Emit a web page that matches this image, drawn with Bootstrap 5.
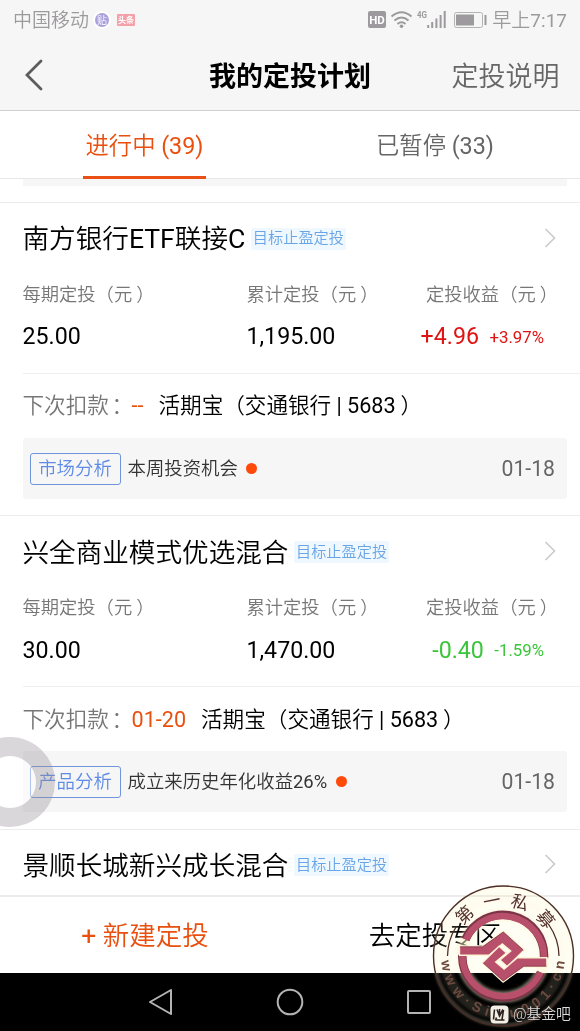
<!DOCTYPE html>
<html lang="zh-CN">
<head>
    <meta charset="UTF-8">
    <meta name="viewport" content="width=device-width, initial-scale=1.0">
    <title>我的定投计划</title>
    <link href="https://cdn.jsdelivr.net/npm/bootstrap@5.3.0/dist/css/bootstrap.min.css" rel="stylesheet">
    <style>
        body {
            width: 580px;
            height: 1031px;
            overflow: hidden;
            background: #fff;
            color: #000;
            font-family: Roboto, "Noto Sans CJK SC", sans-serif;
            font-weight: 350;
            line-height: 1;
        }
        /* digits and latin letters stay regular next to the lighter hanzi */
        .latin {
            font-weight: 400;
        }
        /* full-width punctuation sits closer to the middle of its cell */
        .p-close {
            margin: 0 -.22em 0 .22em;
        }
        .p-colon {
            margin: 0 -.12em 0 .12em;
        }
        .top-area {
            height: 111px;
            background: #f6f6f6;
            border-bottom: 1px solid #cfcfcf;
        }
        .status-bar {
            height: 40px;
            padding: 0 13px 0 13px;
            font-size: 19px;
            color: #9c9a9c;
        }
        .title-bar {
            height: 70px;
            padding: 4px 20.5px 0 24px;
        }
        .page-title {
            font-size: 27px;
            font-weight: 700;
        }
        .help-link {
            font-size: 27px;
            color: #666;
        }
        .plan-tabs {
            height: 68px;
            border-bottom: 1px solid #e8e8e8;
            font-size: 23.3px;
            color: #666;
        }
        .tab-text {
            padding-top: 4px;
        }
        .tab-on {
            width: 123px;
            margin-right: 1px;
            color: #e9500f;
        }
        .tab-on::after {
            content: "";
            position: absolute;
            left: 0;
            right: 0;
            bottom: -1px;
            height: 3.5px;
            background: #ea5014;
        }
        .plan-list {
            height: 716px;
            overflow: hidden;
        }
        .prev-note {
            height: 7px;
            margin: 0 13px 16px 23px;
            background: #f6f6f6;
        }
        .plan {
            height: 313.3px;
            border-top: 1px solid #ececec;
            padding-left: 22.5px;
        }
        .plan-head {
            height: 72px;
            padding-right: 24.5px;
        }
        .plan-head svg {
            margin-bottom: 3px;
        }
        .plan-name {
            font-size: 26.6px;
            padding-top: 1px;
        }
        .tag {
            height: 22px;
            padding: 1px 2px 0;
            margin: 0 0 1px 5.5px;
            font-size: 15.2px;
            background: #eff8ff;
            color: #69a5e6;
            border-radius: 2px;
        }
        .plan-nums {
            height: 99px;
            border-bottom: 1px solid #efefef;
        }
        .plan-nums > div:nth-child(1) { width: 224px; }
        .plan-nums > div:nth-child(2) { width: 172px; }
        .num-label {
            height: 40px;
            font-size: 18.3px;
            color: #777;
        }
        .num-value {
            height: 44px;
            font-size: 23.2px;
            font-weight: 400;
        }
        .gain-col {
            padding-right: 26px;
        }
        .gain-col .num-value {
            padding-right: 10px;
        }
        .rate {
            font-size: 16.8px;
            margin-left: 10.5px;
            padding-top: 1px;
        }
        .up { color: #e01212; }
        .down { color: #3cc53c; }
        .next-pay {
            height: 64px;
            font-size: 21.6px;
        }
        .next-pay .hint { color: #777; }
        .next-pay .date { color: #e9500f; margin: 0 15px 0 1px; }
        .note {
            height: 61px;
            margin-right: 13px;
            padding: 0 12px 0 7px;
            background: #f6f6f6;
            border-radius: 3px;
            font-size: 18.4px;
            color: #333;
        }
        .note-kind {
            width: 91px;
            height: 32px;
            padding-top: 1px;
            margin-right: 7px;
            border: 1px solid #6f95dc;
            border-radius: 3px;
            color: #5f8be6;
        }
        .note-text {
            padding-top: 1px;
        }
        .dot {
            width: 11px;
            height: 11px;
            margin: 0 0 1px 8.5px;
            background: #ff4a0a;
        }
        .note-date {
            font-size: 21.2px;
            color: #666;
        }
        .action-bar {
            height: 78px;
            padding-top: 2px;
            border-top: 2px solid #ececec;
            font-size: 26.5px;
        }
        .action-new { color: #e9500f; }
        .sys-nav {
            height: 58px;
            background: #000;
        }
        .float-ball {
            position: absolute;
            left: -35px;
            top: 737px;
            width: 90px;
            height: 90px;
            border: 19px solid rgba(150, 140, 148, .35);
            background: rgba(255, 255, 255, .45);
            background-clip: padding-box;
        }
        .seal {
            position: absolute;
            left: 430px;
            top: 881px;
        }
        .seal-tint {
            mix-blend-mode: multiply;
        }
        .source-mark {
            position: absolute;
            left: 490px;
            top: 1005px;
            font-size: 14.8px;
            color: #dcdcdc;
        }
    </style>
</head>
<body class="position-relative">
    <header class="top-area">
        <div class="status-bar d-flex align-items-center">
            <span>中国移动</span>
            <svg class="ms-1" width="50" height="20" viewBox="0 0 50 20">
                <circle cx="9" cy="10" r="9" fill="#fff"/>
                <circle cx="9" cy="10" r="7" fill="#aaa0dc"/>
                <text x="9" y="13.8" font-size="10" text-anchor="middle" fill="#fff">贴</text>
                <rect x="24" y="4" width="18" height="12" rx="1" fill="#f4a0a8"/>
                <text x="33" y="13.2" font-size="8" font-weight="700" text-anchor="middle" fill="#fff">头条</text>
            </svg>
            <svg class="ms-auto me-1" width="120" height="22" viewBox="0 0 120 22">
                <rect x="0" y="2" width="18" height="17" rx="2" fill="#9c9a9c"/>
                <text x="9" y="14.8" font-size="11.5" font-weight="700" text-anchor="middle" fill="#fff">HD</text>
                <path d="M23.500 7.500Q33.500-1 43.500 7.500M26.500 11.500Q33.500 5.500 40.500 11.500M29.500 15Q33.500 11.500 37.500 15" fill="none" stroke="#9c9a9c" stroke-width="2"/>
                <circle cx="33.500" cy="17.300" r="1.800" fill="#9c9a9c"/>
                <text x="49" y="9" font-size="9.500" font-weight="700" textLength="10" lengthAdjust="spacingAndGlyphs" fill="#9c9a9c">4G</text>
                <path d="M60.200 19v-3M64.200 19v-6M68.400 19V9.500M72.600 19V6M76.700 19V2" stroke="#9c9a9c" stroke-width="2"/>
                <rect x="86.500" y="3.500" width="28" height="15" rx="2" fill="none" stroke="#b4b2b4"/>
                <rect x="88" y="5.500" width="18" height="11" fill="#9c9a9c"/>
                <path d="M117.500 6v10" stroke="#9c9a9c" stroke-width="2"/>
            </svg>
            <span>早上<span class="latin">7:17</span></span>
        </div>
        <div class="title-bar d-flex align-items-center justify-content-between position-relative">
            <svg class="mb-1" width="20" height="32" viewBox="0 0 20 32">
                <path d="M17 2L3 16L17 30" fill="none" stroke="#5c5c5c" stroke-width="2.800" stroke-linecap="round"/>
            </svg>
            <h1 class="page-title m-0 position-absolute start-50 translate-middle-x">我的定投计划</h1>
            <span class="help-link">定投说明</span>
        </div>
    </header>

    <nav class="plan-tabs d-flex">
        <div class="w-50 d-flex justify-content-center">
            <div class="tab-on tab-text position-relative d-flex align-items-center justify-content-center">进行中&nbsp;<span class="latin">(39)</span></div>
        </div>
        <div class="tab-text w-50 d-flex align-items-center justify-content-center">已暂停&nbsp;<span class="latin">(33)</span></div>
    </nav>

    <main class="plan-list">
        <div class="prev-note"></div>

        <section class="plan">
            <div class="plan-head d-flex align-items-center">
                <span class="plan-name">南方银行<span class="latin">ETF</span>联接<span class="latin">C</span></span>
                <span class="tag d-flex align-items-center">目标止盈定投</span>
                <svg class="ms-auto" width="12" height="20" viewBox="0 0 12 20"><path d="M1.500 1L10.500 10L1.500 19" fill="none" stroke="#ccc" stroke-width="1.700"/></svg>
            </div>
            <div class="plan-nums d-flex text-nowrap">
                <div>
                    <div class="num-label d-flex align-items-center">每期定投（元<span class="p-close">）</span></div>
                    <div class="num-value d-flex align-items-center">25.00</div>
                </div>
                <div>
                    <div class="num-label d-flex align-items-center">累计定投（元<span class="p-close">）</span></div>
                    <div class="num-value d-flex align-items-center">1,195.00</div>
                </div>
                <div class="gain-col flex-fill">
                    <div class="num-label d-flex align-items-center justify-content-end">定投收益（元<span class="p-close">）</span></div>
                    <div class="num-value up d-flex align-items-center justify-content-end">+4.96<span class="rate">+3.97%</span></div>
                </div>
            </div>
            <div class="next-pay d-flex align-items-center text-nowrap">
                <span class="hint">下次扣款<span class="p-colon">：</span></span><span class="date latin">--</span><span>活期宝（交通银行 <span class="latin">| 5683</span><span class="p-close">）</span></span>
            </div>
            <div class="note d-flex align-items-center">
                <span class="note-kind d-flex align-items-center justify-content-center">市场分析</span>
                <span class="note-text">本周投资机会</span>
                <span class="dot rounded-circle"></span>
                <span class="note-date latin ms-auto">01-18</span>
            </div>
        </section>

        <section class="plan">
            <div class="plan-head d-flex align-items-center">
                <span class="plan-name">兴全商业模式优选混合</span>
                <span class="tag d-flex align-items-center">目标止盈定投</span>
                <svg class="ms-auto" width="12" height="20" viewBox="0 0 12 20"><path d="M1.500 1L10.500 10L1.500 19" fill="none" stroke="#ccc" stroke-width="1.700"/></svg>
            </div>
            <div class="plan-nums d-flex text-nowrap">
                <div>
                    <div class="num-label d-flex align-items-center">每期定投（元<span class="p-close">）</span></div>
                    <div class="num-value d-flex align-items-center">30.00</div>
                </div>
                <div>
                    <div class="num-label d-flex align-items-center">累计定投（元<span class="p-close">）</span></div>
                    <div class="num-value d-flex align-items-center">1,470.00</div>
                </div>
                <div class="gain-col flex-fill">
                    <div class="num-label d-flex align-items-center justify-content-end">定投收益（元<span class="p-close">）</span></div>
                    <div class="num-value down d-flex align-items-center justify-content-end">-0.40<span class="rate">-1.59%</span></div>
                </div>
            </div>
            <div class="next-pay d-flex align-items-center text-nowrap">
                <span class="hint">下次扣款<span class="p-colon">：</span></span><span class="date latin">01-20</span><span>活期宝（交通银行 <span class="latin">| 5683</span><span class="p-close">）</span></span>
            </div>
            <div class="note d-flex align-items-center">
                <span class="note-kind d-flex align-items-center justify-content-center">产品分析</span>
                <span class="note-text">成立来历史年化收益<span class="latin">26%</span></span>
                <span class="dot rounded-circle"></span>
                <span class="note-date latin ms-auto">01-18</span>
            </div>
        </section>

        <section class="plan">
            <div class="plan-head d-flex align-items-center">
                <span class="plan-name">景顺长城新兴成长混合</span>
                <span class="tag d-flex align-items-center">目标止盈定投</span>
                <svg class="ms-auto" width="12" height="20" viewBox="0 0 12 20"><path d="M1.500 1L10.500 10L1.500 19" fill="none" stroke="#ccc" stroke-width="1.700"/></svg>
            </div>
        </section>
    </main>

    <div class="action-bar d-flex">
        <div class="action-new w-50 d-flex align-items-center justify-content-center"><span class="latin">+</span>&nbsp;新建定投</div>
        <div class="w-50 d-flex align-items-center justify-content-center">去定投专区</div>
    </div>

    <footer class="sys-nav d-flex justify-content-center align-items-center">
        <svg width="290" height="32" viewBox="0 0 290 32" fill="none" stroke="#b4b4b4" stroke-width="2">
            <path d="M26 4L5 16L26 28Z" stroke-linejoin="round"/>
            <circle cx="145" cy="16" r="12.300"/>
            <rect x="263" y="5" width="22" height="22" rx="1"/>
        </svg>
    </footer>

    <div class="float-ball rounded-circle"></div>

    <!-- round seal in the corner -->
    <svg class="seal seal-tint" width="150" height="150" viewBox="0 0 150 150">
        <circle cx="73.500" cy="75" r="70" fill="#fffef4"/>
    </svg>
    <svg class="seal" width="150" height="150" viewBox="0 0 150 150">
        <defs>
            <path id="arcBottom" d="M11 75A62 62 0 0 0 135 75"/>
            <filter id="soft" x="-20%" y="-20%" width="140%" height="140%"><feGaussianBlur stdDeviation="1.500"/></filter>
        </defs>
        <g fill="none" stroke="#fff3d0" filter="url(#soft)">
            <circle cx="73.500" cy="75" r="69" stroke-width="3" opacity=".3"/>
            <circle cx="73" cy="75" r="58" stroke-width="11" opacity=".14"/>
            <circle cx="73" cy="75" r="41" stroke-width="11" opacity=".5"/>
        </g>
        <circle cx="73.500" cy="75" r="70" fill="none" stroke="#4a2e28" stroke-width="1.400"/>
        <path d="M17.500 75A56 56 0 0 1 26 46M129 75A56 56 0 0 0 119 44" fill="none" stroke="#4a2e28" stroke-width="1.300"/>
        <g fill="none" stroke="#7c3548" stroke-width="8.500">
            <path d="M35.400 58.500A41 41 0 0 1 114 77"/>
            <path d="M32.300 74A41 41 0 0 0 111 91.500"/>
        </g>
        <g fill="none" stroke="#b9506b" stroke-width="6.500">
            <path d="M36 58.500A41 41 0 0 1 114 77"/>
            <path d="M32.300 74A41 41 0 0 0 110.500 91.500"/>
        </g>
        <g fill="#b9506b" stroke="#fff3d6" stroke-width="1.400">
            <path d="M29.500 65H52.300L73.300 50L94.300 69L77.300 85.700L70 79L80.700 70L72.300 63L59 74.300H29.500Z"/>
            <path d="M29.500 65H52.300L73.300 50L94.300 69L77.300 85.700L70 79L80.700 70L72.300 63L59 74.300H29.500Z" transform="rotate(180 73.200 75.500)"/>
        </g>
        <g fill="none" stroke="#7c3548" stroke-width=".8">
            <path d="M30 65.800H52.600L73.300 51L93.300 69"/>
            <path d="M116.500 85.200H93.800L73.200 100L53.200 82"/>
        </g>
        <g fill="#54302a" font-size="17.500" font-weight="400" text-anchor="middle">
            <text transform="translate(73 75) rotate(-43)" y="-50">第</text>
            <text transform="translate(73 75) rotate(-11.500)" y="-50">一</text>
            <text transform="translate(73 75) rotate(17.500)" y="-50">私</text>
            <text transform="translate(73 75) rotate(49)" y="-50">募</text>
        </g>
        <text fill="#6b4a40" font-family="Liberation Sans, sans-serif" font-size="14" font-weight="700"><textPath href="#arcBottom" startOffset="5" textLength="184">www·Simu001·cn</textPath></text>
    </svg>

    <div class="source-mark d-flex align-items-center">
        <svg width="19" height="19" viewBox="0 0 19 19">
            <rect x=".5" y=".5" width="18" height="18" rx="4" fill="#f4efe6"/>
            <path d="M4.500 4.500L3.500 14.500M6.500 12.500L5.500 15.500M7 4.500L9.500 11L13 4.500M9.500 4V11M13.500 5L12 14.500M6.500 15H14.500" fill="none" stroke="#2c2320" stroke-width="1.600"/>
        </svg>
        <span class="ms-1">@基金吧</span>
    </div>

    <script src="https://cdn.jsdelivr.net/npm/bootstrap@5.3.0/dist/js/bootstrap.bundle.min.js"></script>
</body>
</html>
